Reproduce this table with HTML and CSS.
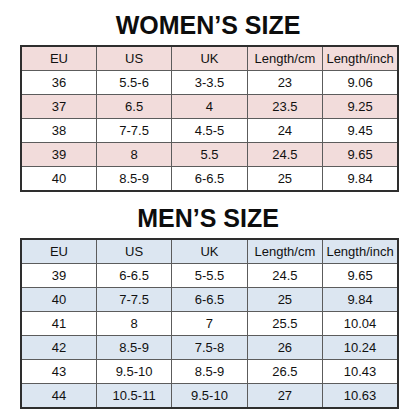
FILE: index.html
```html
<html>
    <head>
        <link rel="stylesheet" href="styles.css">
    </head>
    <body>
        <div class="chart">
            <h1 class="chart-title">WOMEN’S SIZE</h1>
            <table class="size-table women">
                <tr class="head"><td>EU</td><td>US</td><td>UK</td><td>Length/cm</td><td>Length/inch</td></tr>
                <tr><td>36</td><td>5.5-6</td><td>3-3.5</td><td>23</td><td>9.06</td></tr>
                <tr class="alt"><td>37</td><td>6.5</td><td>4</td><td>23.5</td><td>9.25</td></tr>
                <tr><td>38</td><td>7-7.5</td><td>4.5-5</td><td>24</td><td>9.45</td></tr>
                <tr class="alt"><td>39</td><td>8</td><td>5.5</td><td>24.5</td><td>9.65</td></tr>
                <tr><td>40</td><td>8.5-9</td><td>6-6.5</td><td>25</td><td>9.84</td></tr>
            </table>

            <h1 class="chart-title men-title">MEN’S SIZE</h1>
            <table class="size-table men">
                <tr class="head"><td>EU</td><td>US</td><td>UK</td><td>Length/cm</td><td>Length/inch</td></tr>
                <tr><td>39</td><td>6-6.5</td><td>5-5.5</td><td>24.5</td><td>9.65</td></tr>
                <tr class="alt"><td>40</td><td>7-7.5</td><td>6-6.5</td><td>25</td><td>9.84</td></tr>
                <tr><td>41</td><td>8</td><td>7</td><td>25.5</td><td>10.04</td></tr>
                <tr class="alt"><td>42</td><td>8.5-9</td><td>7.5-8</td><td>26</td><td>10.24</td></tr>
                <tr><td>43</td><td>9.5-10</td><td>8.5-9</td><td>26.5</td><td>10.43</td></tr>
                <tr class="alt"><td>44</td><td>10.5-11</td><td>9.5-10</td><td>27</td><td>10.63</td></tr>
            </table>
        </div>
    </body>
</html>
```

FILE: styles.css
```css
body {
    margin: 0;
    background: #fff;
    font-family: "Liberation Sans", Arial, sans-serif;
    color: #111;
}
.chart {
    width: 416px;
    padding-top: 13px;
    display: flex;
    flex-direction: column;
    align-items: center;
}
.chart-title {
    margin: 0 0 7px 0;
    font-size: 25px;
    line-height: 25px;
    font-weight: bold;
    color: #0d0d0d;
}
.men-title {
    margin-top: 14px;
}
.size-table {
    width: 379px;
    margin-left: 3px;
    border-collapse: collapse;
    table-layout: fixed;
    border: 2px solid #2e2e2e;
}
.size-table td {
    border: 1px solid #5c5c5c;
    padding: 0;
    height: 23px;
    line-height: 23px;
    text-align: center;
    font-size: 13px;
}
.women .head, .women .alt {
    background: #f2dcdb;
}
.men .head, .men .alt {
    background: #dce6f1;
}
```
